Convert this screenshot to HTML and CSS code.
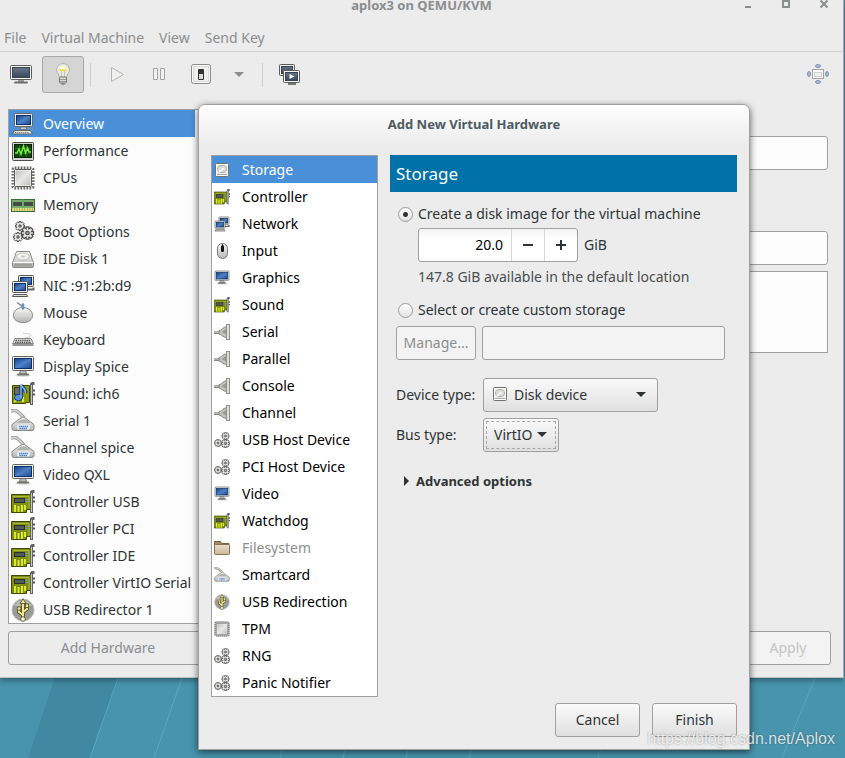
FILE: index.html
```html
<!DOCTYPE html>
<html lang="en">
<head>
    <meta charset="UTF-8">
    <meta name="viewport" content="width=device-width, initial-scale=1.0">
    <title>aplox3 on QEMU/KVM</title>
    <link rel="stylesheet" href="styles.css">
</head>
<body>
    <!-- Icon sprite -->
    <svg class="sprite" aria-hidden="true">
        <defs>
            <linearGradient id="screenBlue" x1="0" y1="0" x2="1" y2="1">
                <stop offset="0" stop-color="#0f3f86"/>
                <stop offset=".5" stop-color="#4f80c4"/>
                <stop offset="1" stop-color="#174a94"/>
            </linearGradient>
            <linearGradient id="metal" x1="0" y1="0" x2="0" y2="1">
                <stop offset="0" stop-color="#fafafa"/>
                <stop offset="1" stop-color="#b4b4b2"/>
            </linearGradient>
            <linearGradient id="chipTop" x1="0" y1="0" x2="1" y2="1">
                <stop offset="0" stop-color="#b9b9b7"/>
                <stop offset=".5" stop-color="#e8e8e6"/>
                <stop offset="1" stop-color="#b9b9b7"/>
            </linearGradient>
            <linearGradient id="screenGrey" x1="0" y1="0" x2="0" y2="1">
                <stop offset="0" stop-color="#66758a"/>
                <stop offset="1" stop-color="#39475a"/>
            </linearGradient>
            <linearGradient id="folderTan" x1="0" y1="0" x2="0" y2="1">
                <stop offset="0" stop-color="#eadfce"/>
                <stop offset="1" stop-color="#cdb696"/>
            </linearGradient>
            <g id="gearShape">
                <path d="M-1 -4.500h2v1.500l1.500-1 1.500 1.500-1 1.500h1.500v2H3l1 1.500L2.500 4 1 3v1.500h-2V3l-1.500 1L-4 2.500-3 1h-1.500v-2H-3l-1-1.500L-2.500-4-1-3z" fill="#e8e8e6" stroke="#4c4e4a" stroke-width=".9"/>
                <circle r="1.300" fill="#999" stroke="#444" stroke-width=".8"/>
            </g>
        </defs>

        <symbol id="i-monitor" viewBox="0 0 24 24">
            <ellipse cx="12" cy="20.5" rx="8" ry="1.5" fill="#000" opacity=".12"/>
            <path d="M9.500 15h5l1 4h-7z" fill="#b9b9b6" stroke="#777"/>
            <path d="M7 19.500h10" stroke="#73756f" stroke-width="2" stroke-linecap="round"/>
            <rect x="1.500" y="1.500" width="21" height="14" rx="1" fill="#ecece8" stroke="#62645f"/>
            <rect x="3.500" y="3.500" width="17" height="10" fill="url(#screenBlue)" stroke="#0b2f66"/>
        </symbol>

        <symbol id="i-computer" viewBox="0 0 24 24">
            <rect x="3.500" y="1.500" width="18" height="13" rx="1" fill="#ecece8" stroke="#62645f"/>
            <rect x="5.500" y="3.500" width="14" height="9" fill="url(#screenBlue)" stroke="#0b2f66"/>
            <path d="M10 15h5l1 2.500H9z" fill="#c9c9c5" stroke="#777"/>
            <path d="M3.500 18.500h16l2 3.500h-20z" fill="#e8e8e4" stroke="#62645f"/>
            <path d="M4 20.500h14" stroke="#888a85" stroke-dasharray="1.500 .5"/>
            <path d="M17 16.500c4-1.500 6 .5 3.500 2" fill="none" stroke="#999"/>
        </symbol>

        <symbol id="i-perf" viewBox="0 0 24 24">
            <rect x="1.500" y="3.500" width="21" height="18" rx="1" fill="#d4d4cf" stroke="#4c4e4a"/>
            <rect x="3.500" y="5.500" width="17" height="13" fill="#15440c" stroke="#0b1f06"/>
            <path d="M4 9.500h16M4 14.500h16M8.500 6v12M15.500 6v12" stroke="#256b17"/>
            <path d="M4 14h2l2-4 2 5 2.500-8 2 7 2-5 1.500 4H20" fill="none" stroke="#72f03c" stroke-width="1.500"/>
        </symbol>

        <symbol id="i-chip" viewBox="0 0 24 24">
            <rect x="1.700" y="1.700" width="20.600" height="20.600" rx="2" fill="none" stroke="#6a6c67" stroke-width="2.500" stroke-dasharray="1.700 1.300"/>
            <rect x="3.500" y="3.500" width="17" height="17" rx="1" fill="url(#chipTop)" stroke="#5c5e59"/>
            <rect x="4.500" y="4.500" width="15" height="15" fill="none" stroke="#fff" opacity=".5"/>
        </symbol>

        <symbol id="i-ram" viewBox="0 0 24 24">
            <rect x=".5" y="6.500" width="23" height="12" fill="#7cab6b" stroke="#3f6b38"/>
            <rect x="2" y="9" width="9" height="4" fill="#444b45"/>
            <rect x="13" y="9" width="9" height="4" fill="#444b45"/>
            <path d="M12 6v12" stroke="#35c04f"/>
            <path d="M1 16.500h22" stroke="#e3d977" stroke-width="3" stroke-dasharray="2 .6"/>
        </symbol>

        <symbol id="i-gears" viewBox="0 0 24 24">
            <use href="#gearShape" x="9" y="6"/>
            <use href="#gearShape" x="7" y="17"/>
            <g transform="translate(16.500 13) scale(1.350)"><use href="#gearShape"/></g>
        </symbol>

        <symbol id="i-gears-small" viewBox="0 0 16 16">
            <g transform="translate(11.500 4) scale(.8)"><use href="#gearShape"/></g>
            <g transform="translate(4 11) scale(.8)"><use href="#gearShape"/></g>
            <g transform="translate(11.500 11.500) scale(.9)"><use href="#gearShape"/></g>
        </symbol>

        <symbol id="i-harddisk" viewBox="0 0 24 24">
            <path d="M5.500 4.500h13l4 11.500v3q0 1.500-1.500 1.500H3q-1.500 0-1.500-1.500v-3z" fill="url(#metal)" stroke="#888a85"/>
            <ellipse cx="12" cy="9.500" rx="6.500" ry="3.500" fill="#f2f2f0" stroke="#bcbcb9"/>
            <ellipse cx="12" cy="9.500" rx="2" ry="1" fill="#c6c6c3"/>
            <path d="M2 15.500h20" stroke="#fff"/>
            <path d="M3 18h18" stroke="#9fa19d" stroke-width="3"/>
        </symbol>

        <symbol id="i-disk" viewBox="0 0 16 16">
            <rect x="1.500" y="1.500" width="13" height="13" rx="1" fill="#e9e9e7" stroke="#72746f"/>
            <rect x="2.500" y="2.500" width="11" height="11" fill="none" stroke="#fff"/>
            <ellipse cx="8" cy="7" rx="4.500" ry="3.500" fill="#dadad7" stroke="#b3b3b0"/>
            <path d="M5 10l5-4" stroke="#fff" stroke-width="1.500"/>
            <path d="M3 12.500h10" stroke="#aaa"/>
        </symbol>

        <symbol id="i-network" viewBox="0 0 24 24">
            <rect x="7.500" y="1.500" width="15" height="11" rx="1" fill="#ecece8" stroke="#555753"/>
            <rect x="9.500" y="3.500" width="11" height="7" fill="url(#screenBlue)" stroke="#0b2f66"/>
            <path d="M12 15.500h10.500v-2" fill="none" stroke="#666" stroke-width="2"/>
            <rect x="1.500" y="7.500" width="15" height="11" rx="1" fill="#ecece8" stroke="#555753"/>
            <rect x="3.500" y="9.500" width="11" height="7" fill="url(#screenBlue)" stroke="#0b2f66"/>
            <path d="M2.500 20.500h13l1 2h-15z" fill="#ddd" stroke="#555753"/>
        </symbol>

        <symbol id="i-mouse" viewBox="0 0 24 24">
            <path d="M12 9C12 4 9 4 6 1.500" fill="none" stroke="#888a85" stroke-width="1.500"/>
            <path d="M12 6.500c6 0 9.500 4 9.500 8s-3.500 7-9.500 7-9.500-3-9.500-7 3.500-8 9.500-8z" fill="url(#metal)" stroke="#888a85"/>
            <path d="M3 13.500c5 2.500 13 2.500 18 0" fill="none" stroke="#d8d8d5"/>
            <path d="M12 3.500v4" stroke="#5b93d6" stroke-width="2.500" stroke-linecap="round"/>
        </symbol>

        <symbol id="i-keyboard" viewBox="0 0 24 24">
            <path d="M12 12c-1-3 9-2 8-5-1-2-5-1-8-2" fill="none" stroke="#cfcfcc"/>
            <path d="M4 10.500h16l2.500 5h-21z" fill="#ddd" stroke="#888a85"/>
            <path d="M4.500 12.500h15M4 14.500h16" stroke="#5e605b" stroke-width="1.500" stroke-dasharray="1.500 .7"/>
            <path d="M1.500 17h21" stroke="#777" stroke-width="1.500"/>
        </symbol>

        <symbol id="i-card" viewBox="0 0 24 24">
            <path d="M.5 4.500h19v15h-4v3h-15z" fill="#7f8e10" stroke="#3f4a00"/>
            <path d="M2 6.500h16v12" fill="none" stroke="#adb93a"/>
            <rect x="3.500" y="8.500" width="10" height="4" fill="#565a56" stroke="#2c2e2b"/>
            <path d="M14 9.500h3M14 11.500h3" stroke="#5c92d0"/>
            <path d="M4 15v7M7.500 16v6M11 15v7M14 15v5" stroke="#dbe92b" stroke-width="2"/>
            <path d="M20.500 23V2.500q0-1 1-1h2" fill="none" stroke="#62645f" stroke-width="3"/>
            <path d="M20.500 22V3" stroke="#c9c9c6"/>
            <path d="M22 7.500h2M22 11.500h2" stroke="#555" stroke-width="2"/>
        </symbol>

        <symbol id="i-sound" viewBox="0 0 24 24">
            <path d="M1.500 3.500h17v17h-4v1h-13z" fill="#8b9a10" stroke="#3f4a00"/>
            <rect x="3.500" y="5.500" width="8" height="7" fill="#6b6e69" stroke="#333"/>
            <path d="M3 20l5-4M12 20v-5" stroke="#dbe92b" stroke-width="2"/>
            <path d="M20.500 23V2.500q0-1 1-1h2" fill="none" stroke="#62645f" stroke-width="3"/>
            <path d="M20.500 22V3" stroke="#c9c9c6"/>
            <path d="M22 8.500h2M22 12.500h2" stroke="#555" stroke-width="2"/>
            <path d="M10 15V3c1 3 5 3 4.500 8" fill="none" stroke="#173f7c" stroke-width="3.500"/>
            <ellipse cx="7.500" cy="15.500" rx="4" ry="3.200" fill="#5c92d8" stroke="#173f7c"/>
            <path d="M10 15V3c1 3 5 3 4.500 8" fill="none" stroke="#84b0ea" stroke-width="1.500"/>
        </symbol>

        <symbol id="i-serial" viewBox="0 0 24 24">
            <path d="M0 2c7-2 9 3 13 7" fill="none" stroke="#9b9d99" stroke-width="3.500"/>
            <path d="M0 2c7-2 9 3 13 7" fill="none" stroke="#d8d8d5" stroke-width="1.500"/>
            <path d="M9 9.500q3-3 6 0l8 6v4q0 2-2 2H3q-2 0-2-2v-4z" fill="url(#metal)" stroke="#888a85"/>
            <path d="M5 14l5-3.500h5l5 3.500z" fill="#b0b2ae"/>
            <rect x="6" y="15.500" width="13" height="5" rx="2" fill="#e8eef8"/>
            <path d="M8 17.500h9M8.500 19.500h8" stroke="#4a7fc6" stroke-width="1.500" stroke-dasharray="1.500 .5"/>
        </symbol>

        <symbol id="i-plug" viewBox="0 0 16 16">
            <path d="M0 8.500h6" stroke="#888a86" stroke-width="3"/>
            <path d="M0 8h5" stroke="#ddd"/>
            <path d="M5 6.500c3 0 3-3 8-4v11c-4 0-5-3-8-3.500z" fill="#c4c5c2" stroke="#82847f"/>
            <path d="M7.500 8l4.500-3v5.500z" fill="#999b97"/>
            <rect x="12.500" y=".5" width="3" height="15" fill="#dededb" stroke="#8f918d"/>
        </symbol>

        <symbol id="i-input" viewBox="0 0 16 16">
            <rect x="3.500" y=".5" width="10" height="15" rx="5" fill="url(#metal)" stroke="#777975"/>
            <path d="M8.500 1v8" stroke="#555"/>
            <path d="M8.500 3.500v4" stroke="#111" stroke-width="3" stroke-linecap="round"/>
        </symbol>

        <symbol id="i-usb" viewBox="0 0 24 24">
            <circle cx="12" cy="12" r="11" fill="#999b98" stroke="#bdbdba"/>
            <path d="M3 8a10 10 0 0 1 18 0z" fill="#b8b8b6"/>
            <path d="M12 20V4M12 17l-4-3v-3M12 14l4-3V8" fill="none" stroke="#4f4a1c" stroke-width="3.500"/>
            <path d="M12 20V4M12 17l-4-3v-3M12 14l4-3V8" fill="none" stroke="#f2e695" stroke-width="2"/>
            <path d="M9 5.500L12 .8l3 4.700z" fill="#f2e695" stroke="#4f4a1c" stroke-width=".8"/>
            <circle cx="12" cy="21" r="2.300" fill="#fbf6cf" stroke="#4f4a1c" stroke-width=".8"/>
            <circle cx="8" cy="10.500" r="1.800" fill="#f2e695" stroke="#4f4a1c" stroke-width=".8"/>
            <rect x="14.300" y="6" width="3.400" height="3.400" fill="#f2e695" stroke="#4f4a1c" stroke-width=".8"/>
        </symbol>

        <symbol id="i-folder" viewBox="0 0 16 16">
            <path d="M.5 13V1.500h6l1.500 2h7V7z" fill="#a58a66" stroke="#7a6040"/>
            <rect x=".5" y="4.500" width="15" height="10" rx="1" fill="url(#folderTan)" stroke="#86704f"/>
        </symbol>

        <symbol id="i-console" viewBox="0 0 24 24">
            <path d="M9 18h6v2H9z" fill="#999"/>
            <path d="M6 20.500h12" stroke="#6d6f6b" stroke-width="2" stroke-linecap="round"/>
            <rect x="1.500" y="3.500" width="21" height="14" rx="1" fill="#f4f4f2" stroke="#5b5d59"/>
            <rect x="3.500" y="5.500" width="17" height="10" fill="url(#screenGrey)" stroke="#3a4350"/>
        </symbol>

        <symbol id="i-bulb" viewBox="0 0 24 24">
            <path d="M12 1.500A6.500 6.500 0 0 0 5.500 8c0 3.500 3 4 3 7.500h7c0-3.500 3-4 3-7.500A6.500 6.500 0 0 0 12 1.500z" fill="#e9e9e4" stroke="#b3b3ae"/>
            <ellipse cx="12" cy="7" rx="4" ry="3" fill="#fdfad0"/>
            <path d="M8.500 7l2 2 1.500-1 1.500 1 2-2" fill="none" stroke="#eadc3e" stroke-width="1.500"/>
            <path d="M10.500 9v6M13.500 9v6" stroke="#c4c4bf"/>
            <rect x="8.500" y="15" width="7" height="6" rx="1" fill="#d9d9d6" stroke="#777975"/>
            <path d="M9 17.500h6M9 19.500h6" stroke="#9a9c98"/>
            <path d="M10.500 22h3" stroke="#555"/>
        </symbol>

        <symbol id="i-play" viewBox="0 0 24 24">
            <path d="M6.500 5.500l12 7-12 7z" fill="#f0f0ef" stroke="#b5b6b3" stroke-linejoin="round"/>
        </symbol>

        <symbol id="i-pause" viewBox="0 0 24 24">
            <path d="M6.500 6.500h4v11h-4zM13.500 6.500h4v11h-4z" fill="#f0f0ef" stroke="#a4a5a2"/>
        </symbol>

        <symbol id="i-shutdown" viewBox="0 0 24 24">
            <rect x="2.500" y="2.500" width="19" height="19" rx="2" fill="#fafafa" stroke="#8b8d89"/>
            <rect x="4.500" y="4.500" width="15" height="15" fill="#f0f0ef" stroke="#dadada"/>
            <rect x="9" y="7" width="6" height="11" rx="1" fill="#333"/>
            <rect x="10" y="12" width="4" height="5" fill="#ddd"/>
        </symbol>

        <symbol id="i-snapshots" viewBox="0 0 24 24">
            <rect x="2.500" y="2.500" width="15" height="11" rx="1" fill="#f4f4f2" stroke="#5b5d59"/>
            <rect x="4.500" y="4.500" width="11" height="7" fill="url(#screenGrey)" stroke="#3a4350"/>
            <path d="M11 22h8" stroke="#777" stroke-width="2"/>
            <rect x="6.500" y="8.500" width="16" height="12" rx="1" fill="#f4f4f2" stroke="#5b5d59"/>
            <rect x="8.500" y="10.500" width="12" height="8" fill="url(#screenGrey)" stroke="#3a4350"/>
            <path d="M12.500 12l5 2.500-5 2.500z" fill="#fff"/>
        </symbol>

        <symbol id="i-fullscreen" viewBox="0 0 24 24">
            <g fill="#a9bad3" stroke="#8196b8">
                <ellipse cx="12" cy="4" rx="2.500" ry="1.500"/>
                <ellipse cx="12" cy="20" rx="2.500" ry="1.500"/>
                <ellipse cx="3" cy="12" rx="1.500" ry="2.500"/>
                <ellipse cx="21" cy="12" rx="1.500" ry="2.500"/>
            </g>
            <rect x="6.500" y="7.500" width="11" height="9" fill="#fafafa" stroke="#a4a5a2"/>
            <rect x="8.500" y="10.500" width="7" height="4" fill="#f1f1f0" stroke="#cfcfcd"/>
        </symbol>
    </svg>

    <!-- Desktop wallpaper -->
    <svg class="wallpaper" viewBox="0 0 845 80" preserveAspectRatio="none" aria-hidden="true">
        <path d="M55 0h63L90 80H28z" fill="#4189a1"/>
        <path d="M118 0L90 80M182 0l-28 80M815 0l-33 80" fill="none" stroke="#58a8be"/>
        <path d="M283 70l-3 10M345 72l-2 8M408 72l-2 8M471 72l-2 8M601 70l-3 10" stroke="#58a8be"/>
    </svg>

    <!-- Virtual machine window -->
    <main class="window">
        <header class="titlebar">
            <h1>aplox3 on QEMU/KVM</h1>
            <div class="window-controls">
                <button type="button" aria-label="Minimize"><svg viewBox="0 0 10 10"><path d="M2 7h6" stroke="currentColor" stroke-width="2"/></svg></button>
                <button type="button" aria-label="Maximize"><svg viewBox="0 0 10 10"><path d="M2 1h6v6H2z" fill="none" stroke="currentColor" stroke-width="2"/></svg></button>
                <button type="button" aria-label="Close"><svg viewBox="0 0 10 10"><path d="M1.500 .5l7 7M8.500 .5l-7 7" stroke="currentColor" stroke-width="2"/></svg></button>
            </div>
        </header>

        <nav class="menubar">
            <button type="button">File</button>
            <button type="button">Virtual Machine</button>
            <button type="button">View</button>
            <button type="button">Send Key</button>
        </nav>

        <div class="toolbar">
            <button type="button" aria-label="Console"><svg><use href="#i-console"/></svg></button>
            <button type="button" class="active" aria-label="Details"><svg><use href="#i-bulb"/></svg></button>
            <span class="separator"></span>
            <button type="button" aria-label="Run"><svg><use href="#i-play"/></svg></button>
            <button type="button" aria-label="Pause"><svg><use href="#i-pause"/></svg></button>
            <button type="button" aria-label="Shut down"><svg><use href="#i-shutdown"/></svg></button>
            <button type="button" class="arrow-button" aria-label="Shut down options"><span class="arrow"></span></button>
            <span class="separator"></span>
            <button type="button" aria-label="Snapshots"><svg><use href="#i-snapshots"/></svg></button>
            <button type="button" class="fullscreen" aria-label="Full screen"><svg><use href="#i-fullscreen"/></svg></button>
        </div>

        <div class="details">
            <aside class="sidebar">
                <ul class="hw-list" role="listbox" aria-label="Hardware">
                    <li role="option" aria-selected="true"><svg><use href="#i-computer"/></svg>Overview</li>
                    <li role="option"><svg><use href="#i-perf"/></svg>Performance</li>
                    <li role="option"><svg><use href="#i-chip"/></svg>CPUs</li>
                    <li role="option"><svg><use href="#i-ram"/></svg>Memory</li>
                    <li role="option"><svg><use href="#i-gears"/></svg>Boot Options</li>
                    <li role="option"><svg><use href="#i-harddisk"/></svg>IDE Disk 1</li>
                    <li role="option"><svg><use href="#i-network"/></svg>NIC :91:2b:d9</li>
                    <li role="option"><svg><use href="#i-mouse"/></svg>Mouse</li>
                    <li role="option"><svg><use href="#i-keyboard"/></svg>Keyboard</li>
                    <li role="option"><svg><use href="#i-monitor"/></svg>Display Spice</li>
                    <li role="option"><svg><use href="#i-sound"/></svg>Sound: ich6</li>
                    <li role="option"><svg><use href="#i-serial"/></svg>Serial 1</li>
                    <li role="option"><svg><use href="#i-serial"/></svg>Channel spice</li>
                    <li role="option"><svg><use href="#i-monitor"/></svg>Video QXL</li>
                    <li role="option"><svg><use href="#i-card"/></svg>Controller USB</li>
                    <li role="option"><svg><use href="#i-card"/></svg>Controller PCI</li>
                    <li role="option"><svg><use href="#i-card"/></svg>Controller IDE</li>
                    <li role="option"><svg><use href="#i-card"/></svg>Controller VirtIO Serial</li>
                    <li role="option"><svg><use href="#i-usb"/></svg>USB Redirector 1</li>
                </ul>
                <button type="button" class="btn" disabled>Add Hardware</button>
            </aside>

            <section class="overview">
                <input type="text" class="entry name-entry" aria-label="Name">
                <input type="text" class="entry title-entry" aria-label="Title">
                <textarea class="entry description" aria-label="Description"></textarea>
                <button type="button" class="btn apply" disabled>Apply</button>
            </section>
        </div>
    </main>

    <!-- Add hardware dialog -->
    <div class="dialog" role="dialog" aria-labelledby="dialogTitle">
        <h2 id="dialogTitle">Add New Virtual Hardware</h2>
        <div class="dialog-body">
            <ul class="hw-list small" role="listbox" aria-label="Hardware type">
                <li role="option" aria-selected="true"><svg><use href="#i-disk"/></svg>Storage</li>
                <li role="option"><svg><use href="#i-card"/></svg>Controller</li>
                <li role="option"><svg><use href="#i-network"/></svg>Network</li>
                <li role="option"><svg><use href="#i-input"/></svg>Input</li>
                <li role="option"><svg><use href="#i-monitor"/></svg>Graphics</li>
                <li role="option"><svg><use href="#i-card"/></svg>Sound</li>
                <li role="option"><svg><use href="#i-plug"/></svg>Serial</li>
                <li role="option"><svg><use href="#i-plug"/></svg>Parallel</li>
                <li role="option"><svg><use href="#i-plug"/></svg>Console</li>
                <li role="option"><svg><use href="#i-plug"/></svg>Channel</li>
                <li role="option"><svg><use href="#i-gears-small"/></svg>USB Host Device</li>
                <li role="option"><svg><use href="#i-gears-small"/></svg>PCI Host Device</li>
                <li role="option"><svg><use href="#i-monitor"/></svg>Video</li>
                <li role="option"><svg><use href="#i-card"/></svg>Watchdog</li>
                <li role="option" aria-disabled="true"><svg><use href="#i-folder"/></svg>Filesystem</li>
                <li role="option"><svg><use href="#i-serial"/></svg>Smartcard</li>
                <li role="option"><svg><use href="#i-usb"/></svg>USB Redirection</li>
                <li role="option"><svg><use href="#i-chip"/></svg>TPM</li>
                <li role="option"><svg><use href="#i-gears-small"/></svg>RNG</li>
                <li role="option"><svg><use href="#i-gears-small"/></svg>Panic Notifier</li>
            </ul>

            <form class="storage">
                <h3>Storage</h3>
                <div class="choice">
                    <input type="radio" id="createDisk" name="disk" checked>
                    <label for="createDisk">Create a disk image for the virtual machine</label>
                </div>
                <div class="size-row">
                    <div class="spin">
                        <input type="text" id="diskSize" value="20.0">
                        <button type="button" aria-label="Decrease"><svg viewBox="0 0 12 12"><path d="M1 6h10" stroke="currentColor" stroke-width="2"/></svg></button>
                        <button type="button" aria-label="Increase"><svg viewBox="0 0 12 12"><path d="M1 6h10M6 1v10" stroke="currentColor" stroke-width="2"/></svg></button>
                    </div>
                    <label for="diskSize">GiB</label>
                </div>
                <p class="hint">147.8 GiB available in the default location</p>
                <div class="choice">
                    <input type="radio" id="customDisk" name="disk">
                    <label for="customDisk">Select or create custom storage</label>
                </div>
                <div class="custom-row">
                    <button type="button" class="btn" disabled>Manage...</button>
                    <input type="text" class="entry" aria-label="Storage path" disabled>
                </div>
                <div class="options">
                    <label for="deviceType">Device type:</label>
                    <div class="combo device">
                        <svg><use href="#i-disk"/></svg>
                        <select id="deviceType"><option>Disk device</option></select>
                        <span class="arrow"></span>
                    </div>
                    <label for="busType">Bus type:</label>
                    <div class="combo bus">
                        <select id="busType"><option>VirtIO</option></select>
                        <span class="arrow"></span>
                    </div>
                </div>
                <details>
                    <summary>Advanced options</summary>
                </details>
            </form>
        </div>
        <div class="dialog-actions">
            <button type="button" class="btn">Cancel</button>
            <button type="button" class="btn">Finish</button>
        </div>
    </div>

    <span class="watermark">https://blog.csdn.net/Aplox</span>
</body>
</html>
```

FILE: styles.css
```css
* {
    box-sizing: border-box;
}

body {
    position: relative;
    min-height: 100vh;
    margin: 0;
    overflow: hidden;
    font-family: "Noto Sans", "Open Sans", sans-serif;
    font-size: 14px;
    line-height: 20px;
    color: #2e3436;
    background-color: #4794ac;
}

h1, h2, h3, p, ul {
    margin: 0;
    padding: 0;
}

button, input, select, textarea {
    font: inherit;
    color: inherit;
    margin: 0;
}

.sprite {
    position: absolute;
    width: 0;
    height: 0;
}

.wallpaper {
    position: absolute;
    bottom: 0;
    left: 0;
    width: 100%;
    height: 80px;
}

/* Main window */
.window {
    position: relative;
    margin-right: 1px;
    padding-bottom: 12px;
    background-color: #ececec;
    border-right: 1px solid #a8a8a8;
    border-bottom: 1px solid #c0c0c0;
    box-shadow: 0 2px 6px rgba(0, 0, 0, 0.4);
}

.titlebar {
    display: flex;
    height: 25px;
    padding: 0 14px;
    color: #8b8e8f;
}

.titlebar h1 {
    flex: 1;
    padding-left: 86px;
    font-size: 13px;
    line-height: 10px;
    text-align: center;
}

.window-controls {
    display: flex;
    gap: 28px;
}

.window-controls button {
    width: 10px;
    height: 10px;
    padding: 0;
    border: none;
    background: none;
}

.window-controls svg {
    display: block;
}

.menubar {
    display: flex;
    gap: 15px;
    height: 27px;
    padding: 3px 4px;
    border-bottom: 1px solid #d2d2d2;
}

.menubar button {
    padding: 0;
    border: none;
    background: none;
    color: #8b8e8f;
}

.toolbar {
    display: flex;
    align-items: center;
    padding: 4px 4px 4px 5px;
}

.toolbar button {
    display: flex;
    align-items: center;
    justify-content: center;
    width: 42px;
    height: 37px;
    padding: 0 0 1px;
    border: 1px solid transparent;
    border-radius: 3px;
    background: none;
}

.toolbar button:first-child {
    width: 32px;
    margin-right: 5px;
}

.toolbar .active {
    border-color: #a8a8a8;
    background-color: #d5d5d5;
}

.toolbar svg {
    width: 24px;
    height: 24px;
}

.toolbar .arrow-button {
    width: 34px;
    color: #8b8e8f;
}

.toolbar .fullscreen {
    margin-left: auto;
}

.separator {
    width: 1px;
    height: 24px;
    margin: 0 5px 0 6px;
    background-color: #cfcfcf;
}

.arrow {
    border: 5px solid transparent;
    border-top-color: currentColor;
    border-bottom: none;
}

.details {
    display: flex;
    gap: 12px;
    padding: 12px 12px 0 8px;
}

.sidebar {
    display: flex;
    flex-direction: column;
    gap: 7px;
    width: 200px;
}

/* Hardware lists */
.hw-list {
    list-style: none;
    border: 1px solid #a0a0a0;
    background-color: #fcfcfc;
}

.sidebar .hw-list {
    padding-right: 12px;
}

.hw-list li {
    display: flex;
    align-items: center;
    gap: 8px;
    height: 27px;
    padding: 0 2px;
    white-space: nowrap;
}

.hw-list svg {
    flex: none;
    width: 24px;
    height: 24px;
}

.hw-list li[aria-selected="true"] {
    color: #fff;
    background-color: #4a90d9;
}

.hw-list li[aria-disabled="true"] {
    color: #8b8e8f;
}

.hw-list.small {
    color: #000;
    background-color: #fff;
}

.hw-list.small li {
    gap: 12px;
}

.hw-list.small svg {
    width: 16px;
    height: 16px;
}

/* Buttons and entries */
.btn {
    height: 34px;
    border: 1px solid #a0a0a0;
    border-radius: 3px;
    background: linear-gradient(#fafafa, #e0e0e0);
}

.btn:disabled {
    color: #8b8e8f;
    background: #f3f3f3;
}

.sidebar .btn {
    background: #ececec;
}

.entry {
    width: 100%;
    height: 34px;
    border: 1px solid #a0a0a0;
    border-radius: 3px;
    background-color: #fcfcfc;
}

.entry:disabled {
    background-color: #f3f3f3;
}

.overview {
    display: flex;
    flex: 1;
    flex-direction: column;
    padding-top: 27px;
}

.overview .entry {
    width: auto;
    margin-right: 3px;
}

.title-entry {
    margin-top: 61px;
}

.overview .description {
    height: 82px;
    margin-top: 6px;
    border-radius: 0;
    resize: none;
}

.overview .apply {
    width: 86px;
    margin-top: auto;
    margin-left: auto;
    color: #c4c4c4;
}

/* Dialog */
.dialog {
    position: absolute;
    top: 104px;
    left: 198px;
    right: 95px;
    padding: 0 12px 12px;
    border: 1px solid #a0a0a0;
    border-radius: 7px 7px 0 0;
    background: linear-gradient(#fff, #ececec 40px);
    box-shadow: 0 2px 7px rgba(0, 0, 0, 0.6);
}

.dialog h2 {
    height: 50px;
    font-size: 13px;
    line-height: 38px;
    text-align: center;
    color: #4d5b62;
}

.dialog-body {
    display: flex;
    gap: 12px;
}

.dialog .hw-list {
    width: 167px;
}

.storage {
    flex: 1;
}

.storage h3 {
    padding: 0 6px;
    font-size: 17px;
    font-weight: normal;
    line-height: 37px;
    color: #fff;
    background-color: #0072a7;
}

.choice {
    display: flex;
    align-items: center;
    gap: 5px;
    margin-top: 12px;
    padding-left: 8px;
}

.choice input {
    width: 15px;
    height: 15px;
    appearance: none;
    border: 1px solid #999;
    border-radius: 50%;
    background: linear-gradient(#fff, #e2e2e2);
}

.choice input:checked {
    background: radial-gradient(circle, #2e3436 2px, transparent 3px), linear-gradient(#fff, #e2e2e2);
}

.size-row {
    display: flex;
    align-items: center;
    gap: 6px;
    margin-top: 4px;
    padding-left: 28px;
}

.spin {
    display: flex;
    width: 160px;
    height: 34px;
    border: 1px solid #a0a0a0;
    border-radius: 3px;
    background: linear-gradient(#f4f4f4, #fff 10px);
}

.spin input {
    flex: 1;
    min-width: 0;
    padding: 0 8px;
    border: none;
    background: none;
    text-align: right;
    color: #000;
}

.spin button {
    width: 33px;
    padding: 0;
    border: none;
    border-left: 1px solid #d8d8d8;
    background: none;
}

.spin svg {
    display: block;
    width: 12px;
    height: 12px;
    margin: auto;
}

.hint {
    margin: 5px 0 13px;
    padding-left: 28px;
    color: #4a4e50;
}

.custom-row {
    display: flex;
    gap: 6px;
    margin: 6px 12px 0 6px;
}

.custom-row .btn {
    flex: none;
    width: 80px;
}

.options {
    display: grid;
    grid-template-columns: 81px 1fr;
    gap: 6px;
    align-items: center;
    margin-top: 18px;
    padding-left: 6px;
    white-space: nowrap;
}

.combo {
    position: relative;
    display: flex;
}

.combo.device {
    width: 175px;
}

.combo.bus {
    width: 76px;
}

.combo select {
    width: 100%;
    height: 34px;
    padding: 0 10px;
    appearance: none;
    border: 1px solid #a0a0a0;
    border-radius: 3px;
    background: linear-gradient(#fafafa, #e0e0e0);
}

.device select {
    padding-left: 30px;
}

.bus select {
    outline: 1px dashed #a8a8a8;
    outline-offset: -4px;
}

.combo svg {
    position: absolute;
    top: 8px;
    left: 9px;
    width: 16px;
    height: 16px;
}

.combo .arrow {
    position: absolute;
    top: 14px;
    right: 12px;
    pointer-events: none;
}

details {
    margin-top: 19px;
    padding-left: 14px;
    font-size: 13px;
    font-weight: bold;
}

summary {
    display: flex;
    align-items: center;
    gap: 7px;
    list-style: none;
}

summary::before {
    content: "";
    border: 5px solid transparent;
    border-left-color: currentColor;
    border-right: none;
}

.dialog-actions {
    display: flex;
    justify-content: flex-end;
    gap: 12px;
    margin-top: 6px;
}

.dialog-actions .btn {
    width: 85px;
}

.watermark {
    position: absolute;
    right: 10px;
    bottom: 9px;
    font-family: "Liberation Sans", Arial, sans-serif;
    font-size: 16px;
    color: rgba(255, 255, 255, 0.8);
    text-shadow: 0 0 2px rgba(0, 0, 0, 0.4);
}
```
